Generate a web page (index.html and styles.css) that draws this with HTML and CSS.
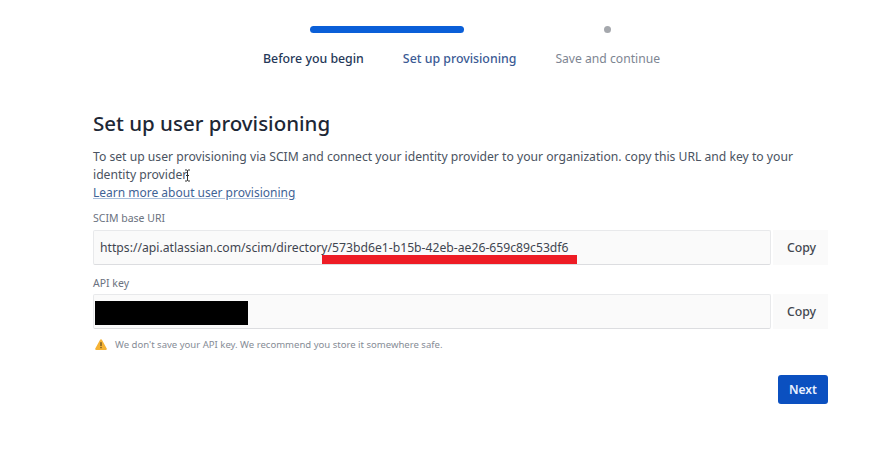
FILE: index.html
```html
<!DOCTYPE html>
<html lang="en">
<head>
<meta charset="utf-8">
<title>Set up user provisioning</title>
<link rel="stylesheet" href="styles.css">
</head>
<body>
<div class="page">
  <div class="track">
    <div class="track-bar"></div>
    <div class="track-dot"></div>
  </div>
  <nav class="steps">
    <span class="step step-done">Before you begin</span>
    <span class="step step-current">Set up provisioning</span>
    <span class="step step-todo">Save and continue</span>
  </nav>
  <main class="form">
    <h1 class="title">Set up user provisioning</h1>
    <p class="intro">To set up user provisioning via SCIM and connect your identity provider to your organization. copy this URL and key to your identity provider<svg class="ibeam" width="7" height="13" viewBox="0 0 7 13"><path d="M1 1h2l.5.6L4 1h2M3.5 1.6v9.8M1 12h2l.5-.6.5.6h2M2 6.5h3" fill="none" stroke="#333" stroke-width="1"/></svg><br><a class="link" href="#">Learn more about user provisioning</a></p>
    <label class="label label-first">SCIM base URI</label>
    <div class="row">
      <div class="field">
        <span class="value">https://api.atlassian.com/scim/directory/573bd6e1-b15b-42eb-ae26-659c89c53df6</span>
        <span class="redline"></span>
      </div>
      <button class="copy">Copy</button>
    </div>
    <label class="label label-second">API key</label>
    <div class="row">
      <div class="field">
        <span class="redact"></span>
      </div>
      <button class="copy">Copy</button>
    </div>
    <div class="warning">
      <svg class="warn-icon" width="12" height="11" viewBox="0 0 12 11"><path d="M5.1.7a1 1 0 0 1 1.8 0l4.8 8.8a1 1 0 0 1-.9 1.5H1.2a1 1 0 0 1-.9-1.5z" fill="#f5b335"/><rect x="5.4" y="3.2" width="1.2" height="3.8" fill="#5c4a1e"/><rect x="5.4" y="7.9" width="1.2" height="1.3" fill="#5c4a1e"/></svg>
      <span>We don't save your API key. We recommend you store it somewhere safe.</span>
    </div>
    <div class="actions">
      <button class="next">Next</button>
    </div>
  </main>
</div>
</body>
</html>
```
FILE: styles.css
```css
* { box-sizing: border-box; }
html, body { margin: 0; padding: 0; background: #fff; }
body {
  width: 878px;
  height: 458px;
  overflow: hidden;
  font-family: "Noto Sans", "Open Sans", sans-serif;
  color: #42526e;
}
.page { padding: 25px 50px 0 93px; }
.track { display: flex; align-items: center; height: 8px; padding-left: 217px; }
.track-bar { width: 154px; height: 7px; border-radius: 4px; background: #0a5fd8; }
.track-dot { width: 7px; height: 7px; border-radius: 50%; background: #a5a8ad; margin-left: 140px; }
.steps {
  display: flex;
  gap: 39px;
  padding-left: 170px;
  margin-top: 18px;
  font-size: 12.35px;
  line-height: 16px;
  white-space: nowrap;
}
.step-done { color: #253858; font-weight: 500; }
.step-current { color: #3a5a94; font-weight: 500; }
.step-todo { color: #7d8592; font-size: 12.15px; }
.form { margin-top: 42px; }
.title {
  margin: 0;
  font-size: 20.5px;
  line-height: 28px;
  font-weight: 500;
  color: #1d2735;
}
.intro {
  margin: 11px 0 0;
  font-size: 12.17px;
  line-height: 18px;
  color: #4a5361;
  width: 730px;
}
.ibeam { vertical-align: -3px; margin-left: -3px; }
.link { color: #3f6396; font-size: 12px; text-decoration: underline; text-decoration-color: #a9bfdc; }
.label { display: block; font-size: 10.5px; line-height: 14px; color: #6b7280; }
.label-first { margin: 8.5px 0 5px; }
.label-second { margin: 11px 0 4px; }
.row { display: flex; align-items: center; }
.field {
  position: relative;
  display: flex;
  align-items: center;
  flex: none;
  width: 678px;
  height: 35px;
  padding-left: 6px;
  background: #fafafa;
  border: 1px solid #e8e9eb;
  border-bottom-color: #dcdde0;
  border-radius: 2px;
}
.value { font-size: 12.2px; color: #3f4550; white-space: nowrap; }
.redline { position: absolute; left: 228px; top: 24px; width: 255px; height: 9px; background: #ee1c25; }
.redact { position: absolute; left: 1px; top: 6px; width: 153px; height: 24px; background: #000; }
.copy {
  flex: none;
  width: 55px;
  height: 35px;
  margin-left: 2px;
  border: 0;
  padding: 0 0 0 2px;
  background: #fafafa;
  font: 500 12.3px "Noto Sans", sans-serif;
  color: #42474f;
}
.warning {
  display: flex;
  align-items: center;
  gap: 8px;
  margin-top: 9px;
  padding-left: 2px;
  font-size: 9.55px;
  line-height: 14px;
  color: #868c96;
}
.actions { display: flex; justify-content: flex-end; margin-top: 23px; }
.next {
  width: 50px;
  height: 29px;
  border: 0;
  border-radius: 3px;
  padding: 0;
  background: #0b50c0;
  color: #e8f0ff;
  font: 600 12px "Noto Sans", sans-serif;
}
```
